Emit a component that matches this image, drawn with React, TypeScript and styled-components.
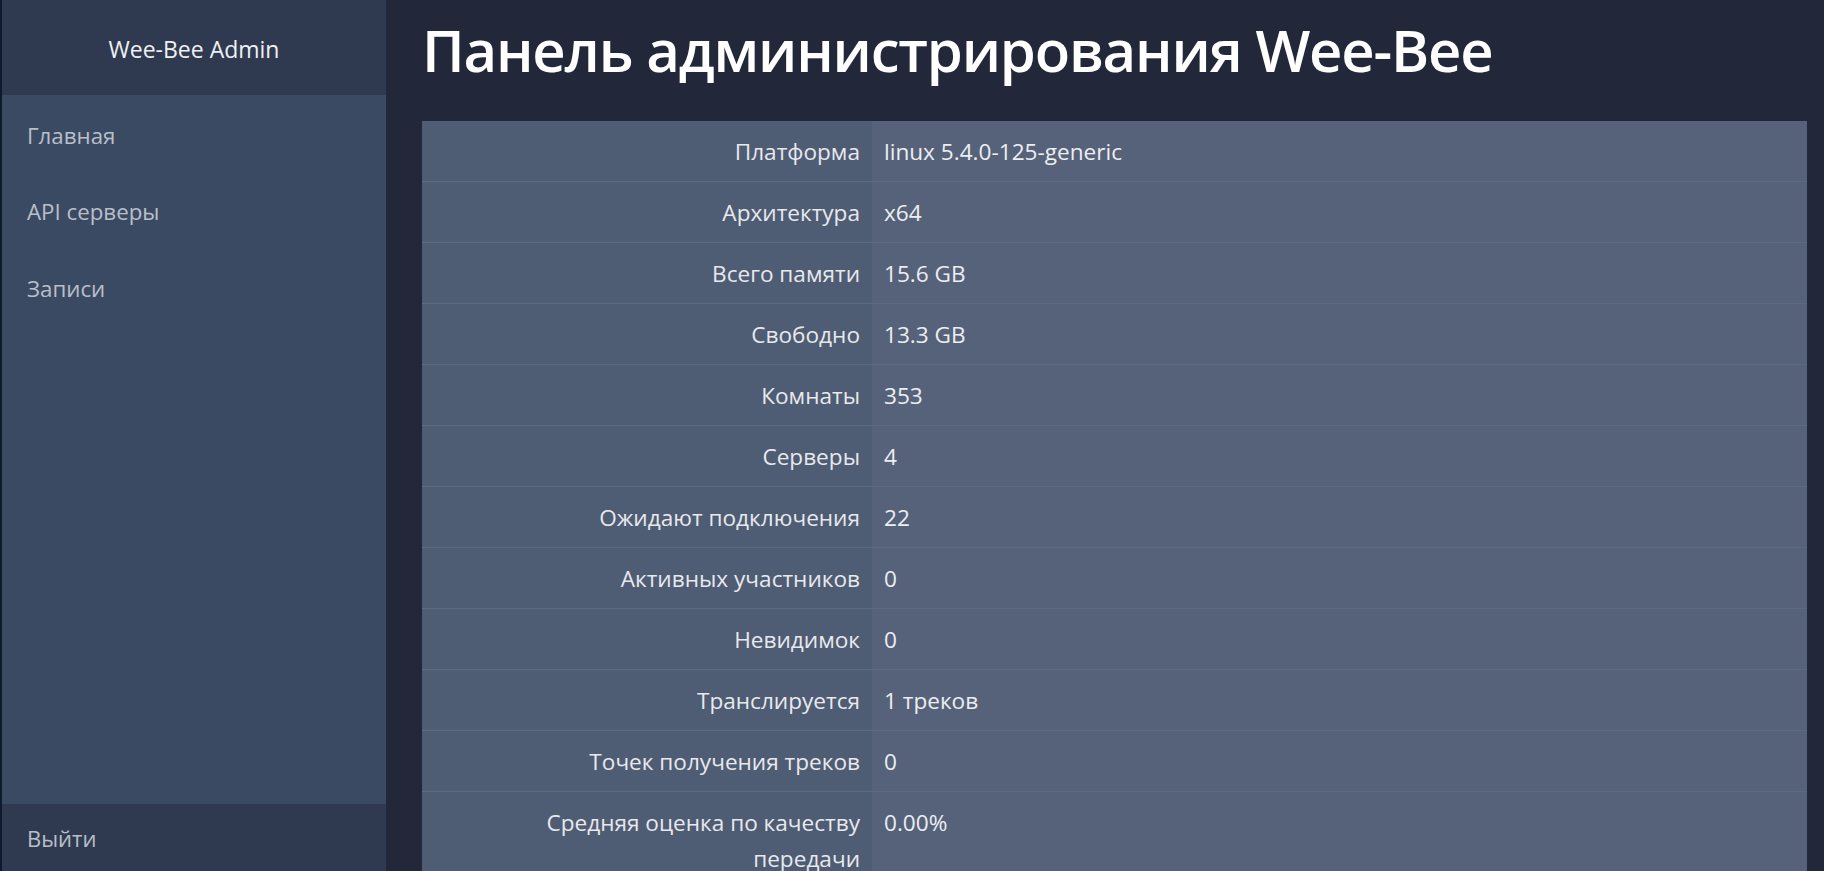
import React from "react";
import styled, { createGlobalStyle } from "styled-components";

const GlobalStyle = createGlobalStyle`
  html, body {
    margin: 0;
    padding: 0;
    background: #222839;
    font-family: "Open Sans", "Noto Sans", sans-serif;
  }
  * { box-sizing: border-box; }
`;

const Layout = styled.div`
  display: flex;
  min-height: 100vh;
  background: #222839;
`;

const Sidebar = styled.aside`
  position: sticky;
  top: 0;
  flex: 0 0 386px;
  height: 100vh;
  display: flex;
  flex-direction: column;
  background: #3b4a63;
  border-left: 2px solid #0e1a2e;
`;

const Brand = styled.div`
  height: 95px;
  display: flex;
  align-items: center;
  justify-content: center;
  padding-top: 2px;
  background: #2f3a51;
  color: #eef0f3;
  font-size: 23px;
`;

const Nav = styled.nav`
  flex: 1;
  display: flex;
  flex-direction: column;
  padding-top: 2px;
`;

const NavItem = styled.a`
  height: 76.5px;
  display: flex;
  align-items: center;
  padding-left: 25px;
  color: #b9bfc9;
  font-size: 22.3px;
  text-decoration: none;
  cursor: pointer;
`;

const Footer = styled.div`
  height: 67px;
  display: flex;
  align-items: center;
  padding-left: 25px;
  background: #2f3a51;
  color: #b9bfc9;
  font-size: 22px;
`;

const Main = styled.main`
  flex: 1;
  min-width: 0;
  padding: 14px 17px 0 36px;
`;

const Title = styled.h1`
  margin: 0 0 35px;
  font-size: 58px;
  line-height: 72px;
  font-weight: 600;
  letter-spacing: -1.2px;
  color: #ffffff;
`;

const Table = styled.table`
  width: 100%;
  border-collapse: collapse;
  font-size: 22.6px;
`;

const Row = styled.tr`
  border-bottom: 1px solid #5d6b80;
`;

const Label = styled.th`
  width: 450px;
  padding: 13px 12px 11px;
  text-align: right;
  font-weight: 400;
  line-height: 36px;
  vertical-align: top;
  background: #4e5c74;
  color: #e8e9ec;
`;

const Value = styled.td`
  padding: 13px 12px 11px;
  text-align: left;
  line-height: 36px;
  vertical-align: top;
  background: #566279;
  color: #eceef2;
`;

const rows: [string, string][] = [
  ["Платформа", "linux 5.4.0-125-generic"],
  ["Архитектура", "x64"],
  ["Всего памяти", "15.6 GB"],
  ["Свободно", "13.3 GB"],
  ["Комнаты", "353"],
  ["Серверы", "4"],
  ["Ожидают подключения", "22"],
  ["Активных участников", "0"],
  ["Невидимок", "0"],
  ["Транслируется", "1 треков"],
  ["Точек получения треков", "0"],
  ["Средняя оценка по качеству передачи", "0.00%"],
];

export default function App() {
  return (
    <>
      <GlobalStyle />
      <Layout>
        <Sidebar>
          <Brand>Wee-Bee Admin</Brand>
          <Nav>
            <NavItem>Главная</NavItem>
            <NavItem>API серверы</NavItem>
            <NavItem>Записи</NavItem>
          </Nav>
          <Footer>Выйти</Footer>
        </Sidebar>
        <Main>
          <Title>Панель администрирования Wee-Bee</Title>
          <Table>
            <tbody>
              {rows.map(([k, v]) => (
                <Row key={k}>
                  <Label>{k}</Label>
                  <Value>{v}</Value>
                </Row>
              ))}
            </tbody>
          </Table>
        </Main>
      </Layout>
    </>
  );
}
